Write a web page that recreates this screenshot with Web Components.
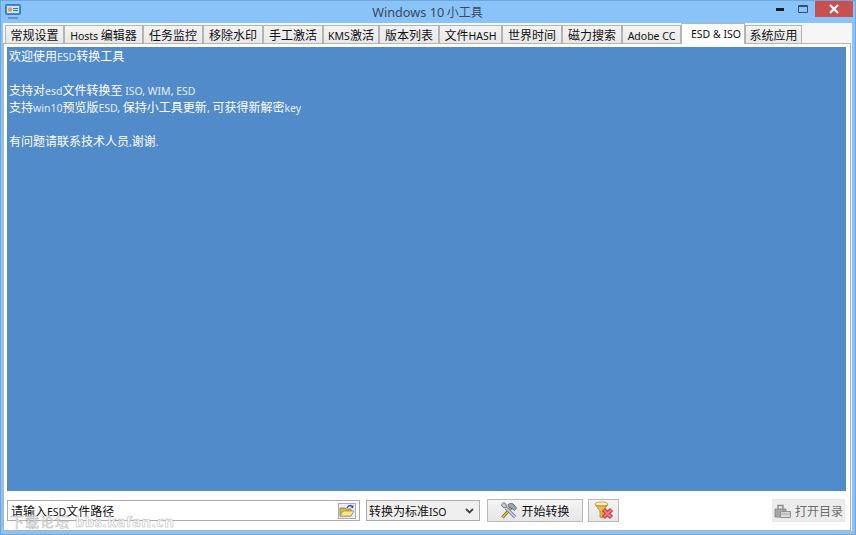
<!DOCTYPE html>
<html>
<head>
<meta charset="utf-8">
<style>
    html, body { margin: 0; padding: 0; height: 100%; overflow: hidden; }
    body { font-family: "Noto Sans CJK SC", sans-serif; font-size: 12px; }
</style>
</head>
<body>
<tool-window>
    <tool-tabs slot="tabs"></tool-tabs>
    <log-panel slot="panel"></log-panel>
    <action-bar slot="bar"></action-bar>
</tool-window>

<script>
const FONT = `"Noto Sans CJK SC", sans-serif`;
const LATIN_CSS = `.l { font-family: "Noto Sans", sans-serif; font-size: 10.5px; }`;

// the original UI draws latin runs much smaller than the CJK ones
function latin(text) {
    return text.replace(/&amp;/g, "&").replace(/[\x21-\x7e]+(?: [\x21-\x7e]+)*/g, (m) => `<span class="l">${m.replace(/&/g, "&amp;")}</span>`);
}

class ToolWindow extends HTMLElement {
    constructor() {
        super();
        this.attachShadow({ mode: "open" });
        this.shadowRoot.innerHTML = `
            <style>
                :host { display: flex; flex-direction: column; width: 856px; height: 535px; box-sizing: border-box; background: #8ac3f7; border: 1px solid #6fa7de; padding: 0 3px 3px 2px; font-family: ${FONT}; position: relative; }
                .title { height: 22px; margin: 0 -3px 0 -2px; position: relative; flex: none; }
                .title svg { display: block; }
                .icon { position: absolute; left: 4px; top: 3px; }
                .name { position: absolute; left: 0; right: 1px; top: 2px; text-align: center; font-size: 12px; line-height: 17px; color: #3b4a5a; }
                .name span { font-family: "Noto Sans", sans-serif; font-size: 12.7px; }
                .ctrl { position: absolute; top: 0; right: 2px; display: flex; align-items: flex-start; }
                .btn { width: 23px; height: 16px; display: flex; align-items: center; justify-content: center; }
                .close { width: 38px; height: 16px; background: #c75050; display: flex; align-items: center; justify-content: center; }
                .body { flex: 1; background: #f6f6f6; display: flex; flex-direction: column; min-height: 0; }
                .page { flex: 1; margin: -1px 1px 0 0; background: #fff; border: 1px solid #b4b4b4; display: flex; flex-direction: column; min-height: 0; }
            </style>
            <div class="title">
                <svg class="icon" width="16" height="15" viewBox="0 0 16 15">
                    <rect x=".5" y=".5" width="15" height="10" rx="1" fill="#3f8fe0" stroke="#3a78b8"/>
                    <rect x="2" y="2" width="12" height="7" fill="#cfe4f8"/>
                    <circle cx="5" cy="5.500" r="2.200" fill="#f0a030"/>
                    <path d="M8 4.500h5M8 6.500h5" stroke="#2f78c8"/>
                    <path d="M6 11h4v2H6z" fill="#9fc4e8"/>
                    <path d="M3 14h10" stroke="#4f88c0" stroke-width="1.500"/>
                </svg>
                <div class="name"><span>Windows 10</span> 小工具</div>
                <div class="ctrl">
                    <div class="btn"><svg width="9" height="4"><rect y="1" width="8" height="3" fill="#1d1d1d"/></svg></div>
                    <div class="btn"><svg width="11" height="10"><path d="M.5 1.500h9v7h-9z" fill="none" stroke="#36536e"/><path d="M1 2.500h8" stroke="#36536e"/></svg></div>
                    <div class="close"><svg width="10" height="10"><path d="M1 1l8 8M9 1l-8 8" stroke="#fff" stroke-width="2.200"/></svg></div>
                </div>
            </div>
            <div class="body">
                <slot name="tabs"></slot>
                <div class="page"><slot name="panel"></slot><slot name="bar"></slot></div>
            </div>
        `;
    }
}

class ToolTabs extends HTMLElement {
    constructor() {
        super();
        this.attachShadow({ mode: "open" });
        const tabs = [
            ["常规设置", 59], ["Hosts 编辑器", 79], ["任务监控", 60], ["移除水印", 60], ["手工激活", 60], ["KMS激活", 56], ["版本列表", 60],
            ["文件HASH", 63], ["世界时间", 60], ["磁力搜索", 60], ["Adobe CC", 59], ["ESD &amp; ISO", 64], ["系统应用", 57]
        ];
        const items = tabs.map(([t, w]) => `<div class="tab${t.startsWith("ESD") ? " on" : ""}" style="width:${w}px">${latin(t)}</div>`).join("");
        this.shadowRoot.innerHTML = `
            <style>
                :host { display: flex; height: 21px; padding-left: 2px; align-items: flex-start; flex: none; position: relative; z-index: 1; }
                ${LATIN_CSS}
                .tab { box-sizing: border-box; height: 18px; margin-top: 2px; border: 1px solid #b4b4b4; border-bottom: 0; background: linear-gradient(#f3f3f3, #e8e8e8); text-align: center; font-size: 12px; line-height: 17px; color: #111; white-space: nowrap; }
                .on { height: 21px; margin-top: 0; background: #fff; line-height: 18px; padding-left: 6px; }
            </style>
            ${items}
        `;
    }
}

class LogPanel extends HTMLElement {
    constructor() {
        super();
        this.attachShadow({ mode: "open" });
        const lines = ["欢迎使用ESD转换工具", "", "支持对esd文件转换至 ISO, WIM, ESD", "支持win10预览版ESD, 保持小工具更新, 可获得新解密key", "", "有问题请联系技术人员,谢谢."];
        this.shadowRoot.innerHTML = `
            <style>
                :host { display: block; flex: 1; margin: 3px 0 0 3px; width: 839px; background: #518bca; color: #fff; font-size: 12px; line-height: 17px; padding: 0 0 0 2px; box-sizing: border-box; min-height: 0; }
                ${LATIN_CSS}
                .l { color: #e4eefa; }
                div { height: 17px; white-space: nowrap; }
            </style>
            ${lines.map((t) => `<div>${latin(t)}</div>`).join("")}
        `;
    }
}

class ActionBar extends HTMLElement {
    constructor() {
        super();
        this.attachShadow({ mode: "open" });
        this.shadowRoot.innerHTML = `
            <style>
                :host { display: flex; flex: none; height: 39px; align-items: flex-start; padding: 8px 0 0 3px; box-sizing: border-box; font-size: 12px; color: #111; position: relative; }
                ${LATIN_CSS}
                .input { box-sizing: border-box; width: 353px; height: 21px; border: 1px solid #ababab; background: #fff; display: flex; align-items: center; justify-content: space-between; padding: 0 3px; margin-top: 1px; }
                .select { box-sizing: border-box; width: 114px; height: 21px; margin: 1px 0 0 6px; border: 1px solid #acacac; background: #efefef; display: flex; align-items: center; justify-content: space-between; padding: 0 5px 0 2px; }
                .btn { box-sizing: border-box; height: 23px; border: 1px solid #b9b9b9; background: linear-gradient(#f4f4f4, #e6e6e6); display: flex; align-items: center; justify-content: center; gap: 3px; }
                .go { width: 96px; margin-left: 7px; }
                .clear { width: 31px; margin-left: 5px; }
                .open { width: 73px; margin-left: auto; margin-right: 5px; color: #6d6d6d; border-color: #e8e8e8; background: #ececec; gap: 3px; }
                .mark { position: absolute; left: 6px; top: 22px; font-size: 14px; line-height: 16px; color: rgba(255,255,255,.85); -webkit-text-stroke: .5px #b4b4b4; letter-spacing: 1px; word-spacing: 1px; white-space: nowrap; pointer-events: none; }
                .mark span { font-family: "Noto Sans", sans-serif; font-size: 14.5px; font-weight: 700; letter-spacing: .6px; }
            </style>
            <div class="input"><span>${latin("请输入ESD文件路径")}</span>
                <svg width="18" height="16" viewBox="0 0 18 16">
                    <rect x=".5" y=".5" width="17" height="15" fill="#ecebf8" stroke="#a8a8d0"/>
                    <path d="M2 5h5l1 1h5v7H2z" fill="#d9b64a" stroke="#8f7a2e" stroke-width=".8"/>
                    <path d="M2 13l3-5h11l-3 5z" fill="#f8e690" stroke="#a58f3a" stroke-width=".8"/>
                    <path d="M9 5c1-2 3-3 5-2" fill="none" stroke="#3550c0" stroke-width="1.300"/>
                    <path d="M15.500 2l-.3 3.500-3-1.500z" fill="#3550c0"/>
                </svg>
            </div>
            <div class="select"><span>${latin("转换为标准ISO")}</span>
                <svg width="9" height="6" viewBox="0 0 9 6"><path d="M1 1l3.500 3.500L8 1" fill="none" stroke="#444" stroke-width="1.800"/></svg>
            </div>
            <div class="btn go">
                <svg width="18" height="17" viewBox="0 0 18 17">
                    <path d="M2.500 15.500L11 6" stroke="#7a5a20" stroke-width="3"/>
                    <path d="M2.500 15.500L11 6" stroke="#eeb84e" stroke-width="1.600"/>
                    <path d="M15 15l-9-9" stroke="#6f7f90" stroke-width="3.200"/>
                    <path d="M15 15l-9-9" stroke="#c8d4e0" stroke-width="1.600"/>
                    <path d="M1.500 3.500L4 6l2.500-1L6 2 4 .8C2.500 1 1.500 2 1.500 3.500z" fill="#b8c6d4" stroke="#5e6e7e" stroke-width=".8"/>
                    <path d="M8 2.500C10 1 13 1 14 3l2.500 3-2 2.500L11 6 8.500 5z" fill="#9aa6b2" stroke="#56616c" stroke-width=".8"/>
                </svg>
                <span>开始转换</span>
            </div>
            <div class="btn clear">
                <svg width="20" height="19" viewBox="0 0 20 19">
                    <ellipse cx="7.500" cy="3" rx="6.500" ry="2" fill="#fff3b8" stroke="#b8902e" stroke-width=".8"/>
                    <path d="M1.500 4L6 10v6l3 1v-7l4.500-6c-2 1.500-10 1.500-12 0z" fill="#eeb948" stroke="#b08428" stroke-width=".8"/>
                    <path d="M9.500 8.500l8 8M17.500 8.500l-8 8" stroke="#b83c3c" stroke-width="4.400"/>
                    <path d="M10 9l7 7M17 9l-7 7" stroke="#ef7c78" stroke-width="2.200"/>
                </svg>
            </div>
            <div class="btn open">
                <svg width="18" height="16" viewBox="0 0 18 16">
                    <path d="M1 6h11v8H1z" fill="#a6a6a6" stroke="#8b8b8b"/>
                    <path d="M4 6V2.500h5V6" fill="none" stroke="#8b8b8b" stroke-width="1.400"/>
                    <path d="M6.500 8.500h10v6h-10z" fill="#d8d8d8" stroke="#929292"/>
                    <path d="M7 11h9" stroke="#a8a8a8"/>
                </svg>
                <span>打开目录</span>
            </div>
            <div class="mark">下载论坛 <span>bbs.kafan.cn</span></div>
        `;
    }
}

customElements.define("tool-window", ToolWindow);
customElements.define("tool-tabs", ToolTabs);
customElements.define("log-panel", LogPanel);
customElements.define("action-bar", ActionBar);
</script>
</body>
</html>
